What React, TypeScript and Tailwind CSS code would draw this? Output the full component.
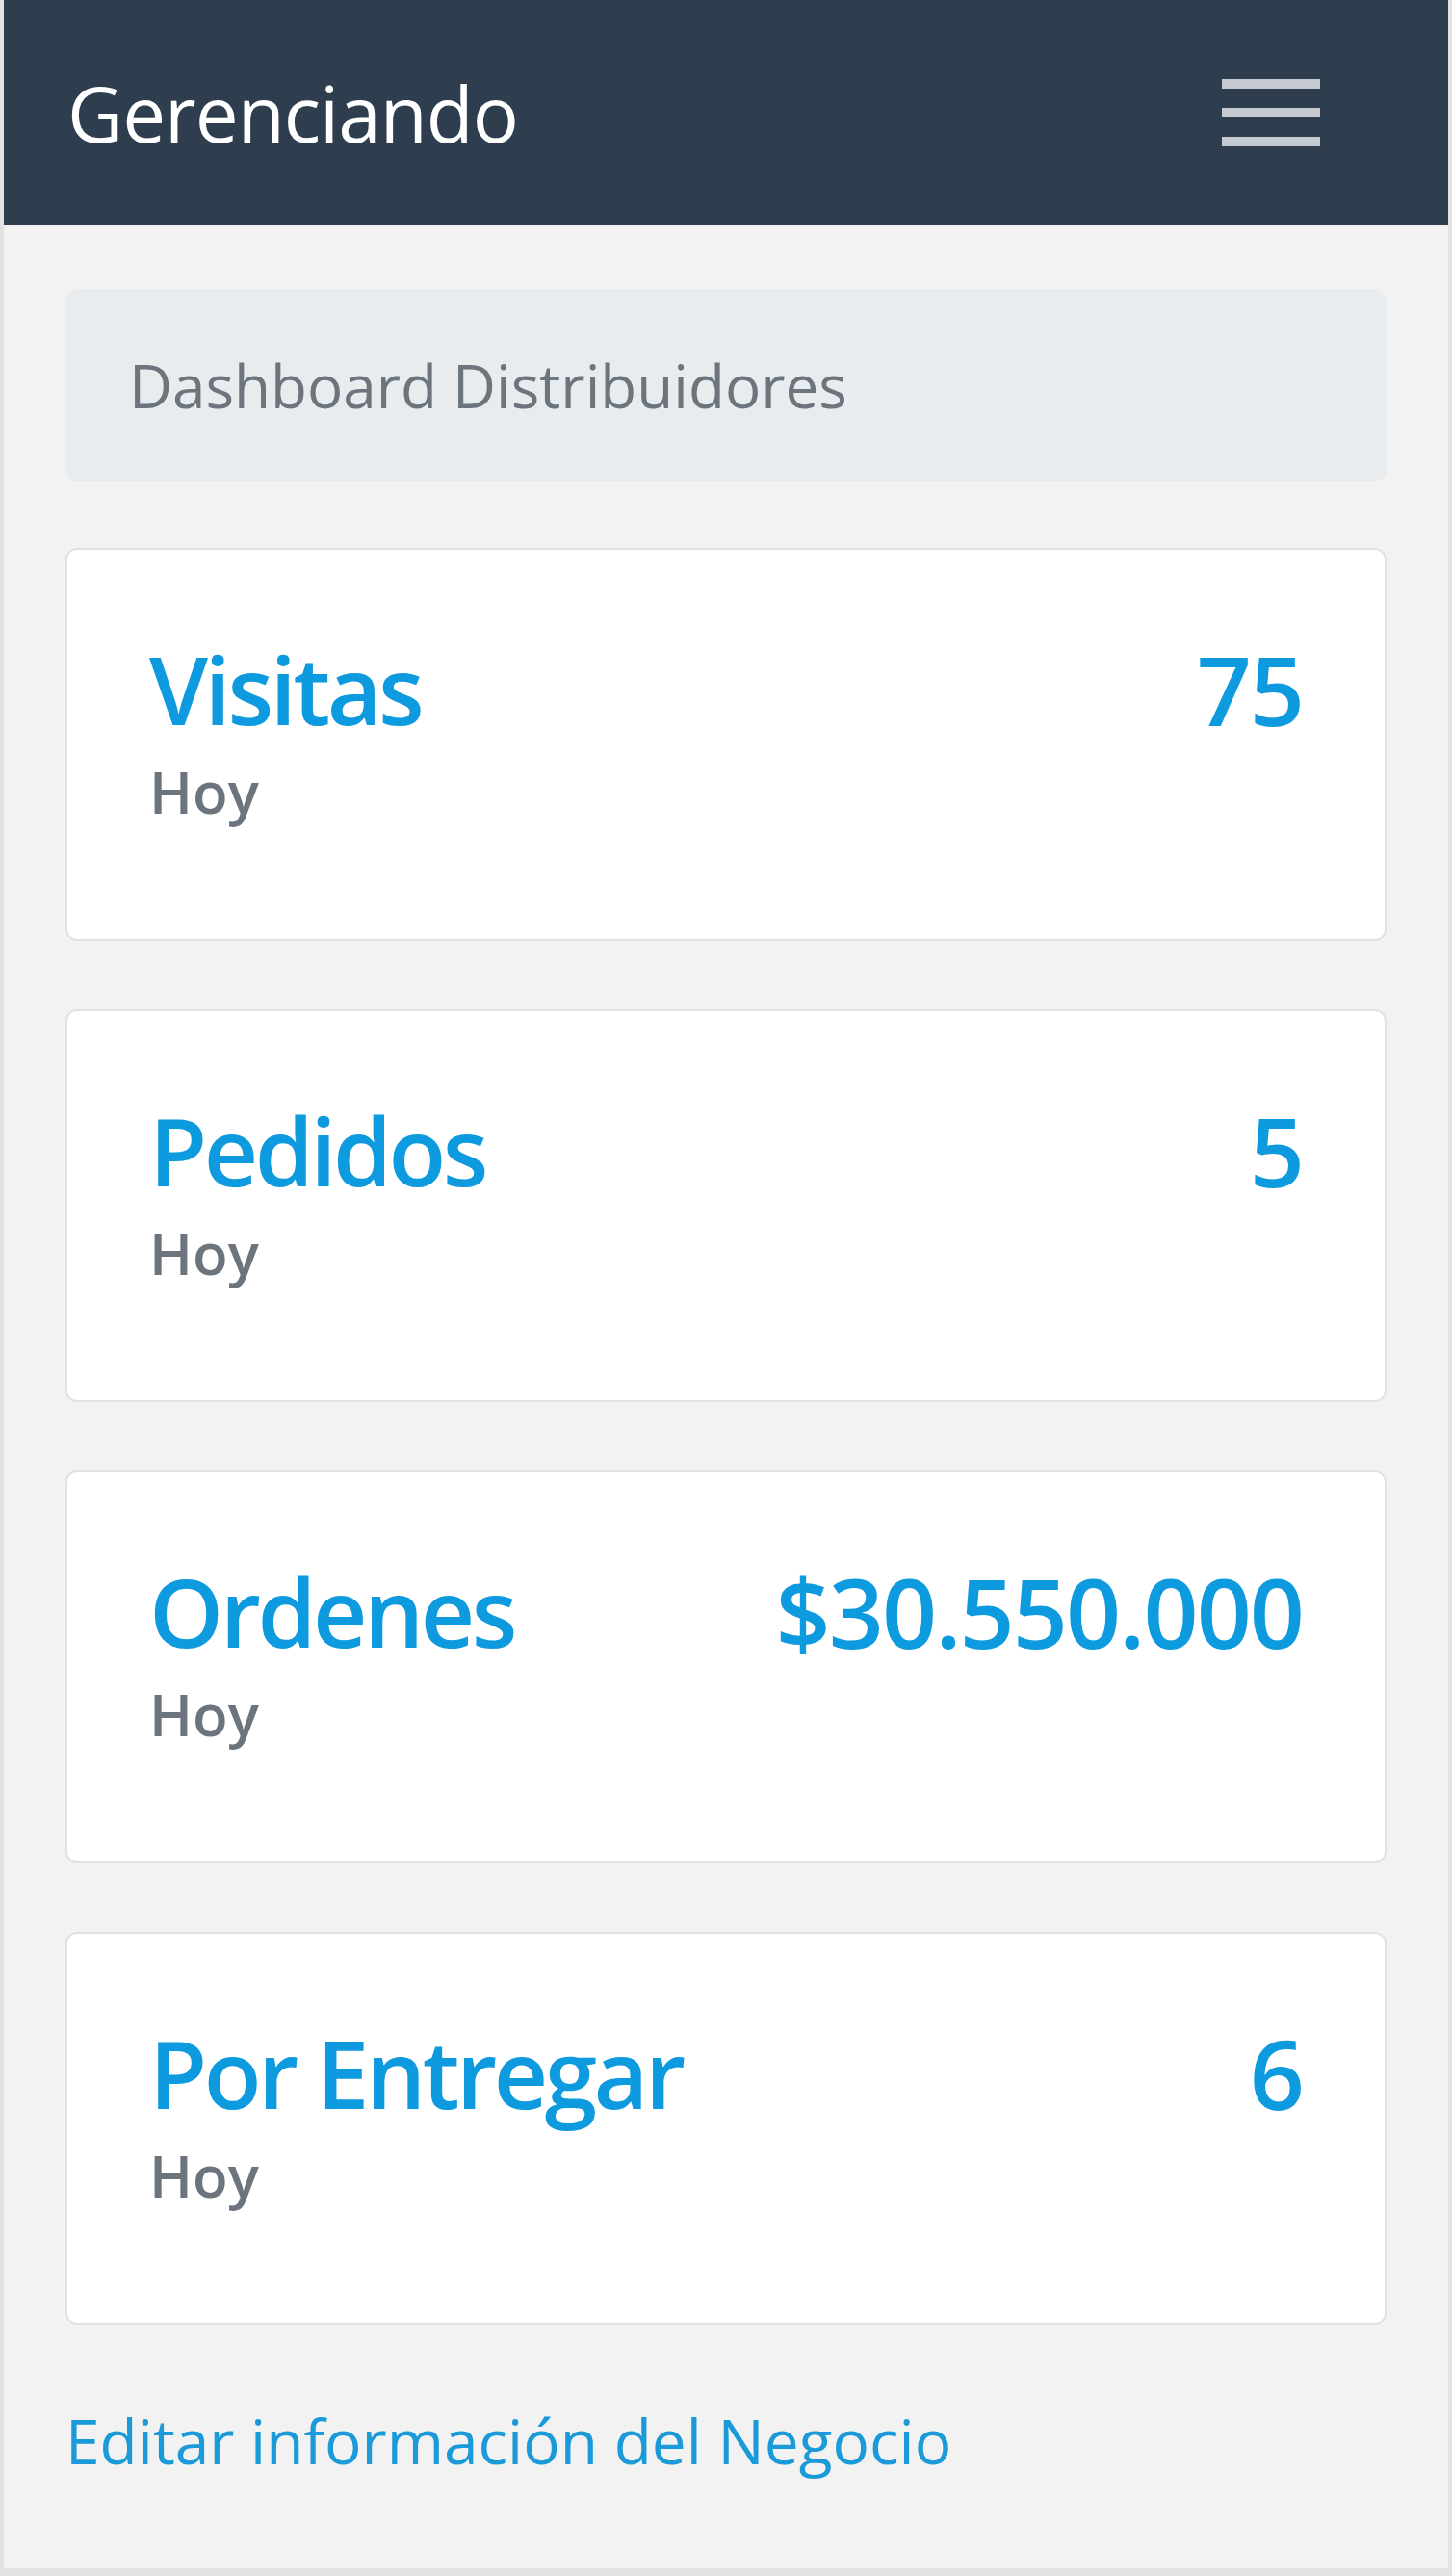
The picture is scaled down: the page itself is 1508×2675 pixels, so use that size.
import React from 'react';

interface Stat {
  label: string;
  value: string;
}

const stats: Stat[] = [
  { label: 'Visitas', value: '75' },
  { label: 'Pedidos', value: '5' },
  { label: 'Ordenes', value: '$30.550.000' },
  { label: 'Por Entregar', value: '6' },
];

const MenuIcon = () => (
  <svg width="102" height="72" viewBox="0 0 102 72" fill="none">
    <line x1="0" y1="6" x2="102" y2="6" stroke="#c4cad0" strokeWidth="10" />
    <line x1="0" y1="36" x2="102" y2="36" stroke="#c4cad0" strokeWidth="10" />
    <line x1="0" y1="66" x2="102" y2="66" stroke="#c4cad0" strokeWidth="10" />
  </svg>
);

const StatCard = ({ stat }: { stat: Stat }) => (
  <div className="h-[408px] rounded-[12px] border-2 border-[#e2e2e2] bg-white px-[85px] pt-[84px]">
    <div className="flex items-start justify-between">
      <h3 className="text-[98px] leading-[120px] font-semibold text-[#0e9ade] tracking-[-3.5px]">
        {stat.label}
      </h3>
      <span className="text-[100px] leading-[120px] font-semibold text-[#0e9ade] tracking-[-2px]">
        {stat.value}
      </span>
    </div>
    <p className="mt-[11px] text-[60px] leading-[72px] font-semibold text-[#6c757d]">Hoy</p>
  </div>
);

export default function App() {
  return (
    <div
      className="box-border h-[2675px] w-[1508px] border-x-4 border-b-8 border-[#e3e3e3] bg-[#f2f2f2]"
      style={{ fontFamily: '"Open Sans", "Noto Sans", sans-serif' }}
    >
      <nav className="flex h-[234px] items-center justify-between bg-[#2f3e4e] pl-[66px] pr-[133px]">
        <span className="text-[80px] leading-[120px] text-white tracking-[-1px]">Gerenciando</span>
        <MenuIcon />
      </nav>

      <main className="px-[64px] pt-[66px]">
        <div className="flex h-[200px] items-center rounded-[12px] bg-[#e9ecef] px-[66px]">
          <span className="text-[62px] leading-[93px] text-[#6c757d]">Dashboard Distribuidores</span>
        </div>

        <div className="mt-[69px] flex flex-col gap-[71px]">
          {stats.map((s) => (
            <StatCard key={s.label} stat={s} />
          ))}
        </div>

        <a href="#" className="mt-[73px] block text-[64px] leading-[96px] text-[#1a9ad8]">
          Editar información del Negocio
        </a>
      </main>
    </div>
  );
}
